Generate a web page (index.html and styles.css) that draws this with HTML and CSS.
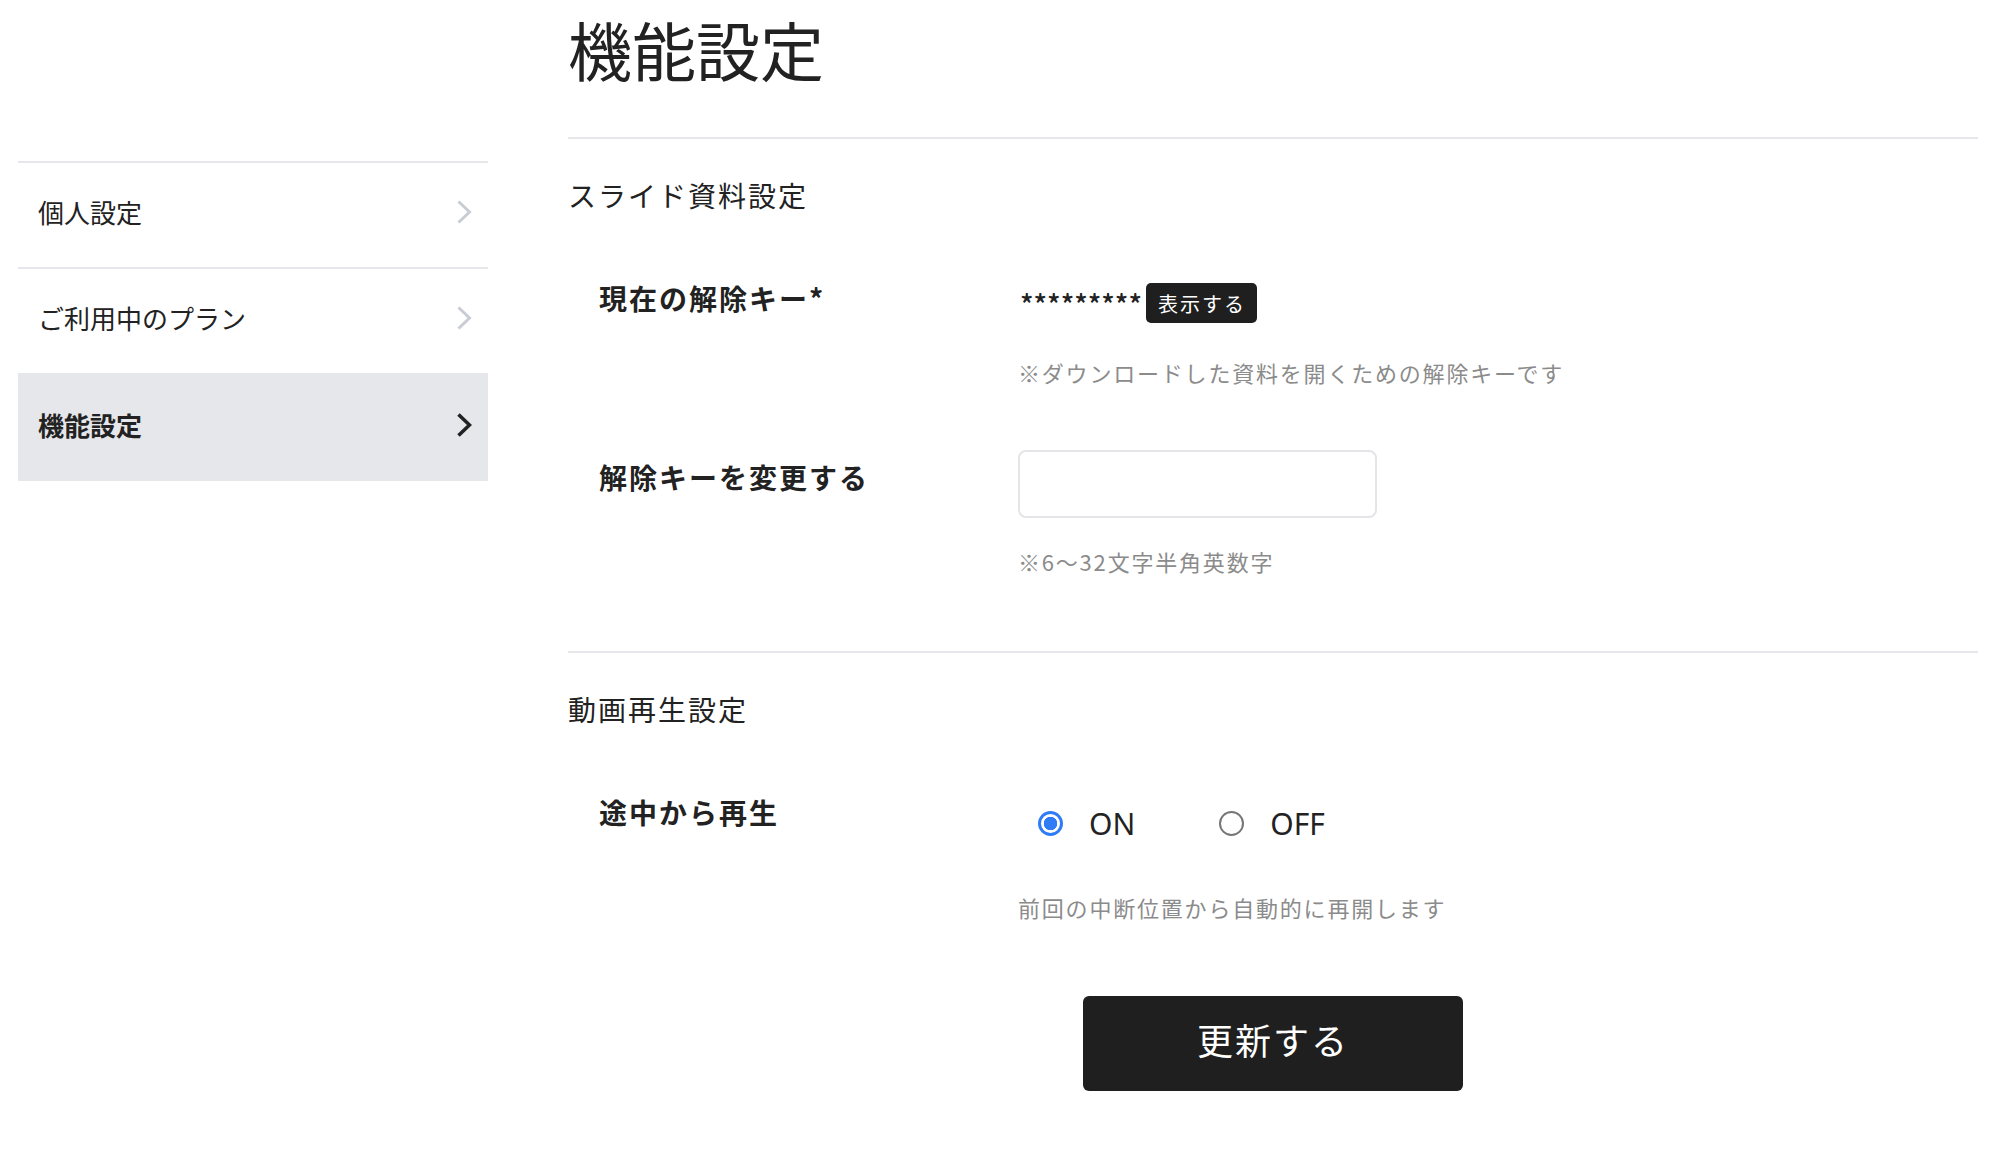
FILE: index.html
```html
<!DOCTYPE html>
<html lang="ja">
<head>
    <meta charset="UTF-8">
    <meta name="viewport" content="width=device-width, initial-scale=1.0">
    <title>機能設定</title>
    <link rel="stylesheet" href="styles.css">
</head>
<body>
    <div class="layout">
        <nav class="sidebar">
            <ul class="side-menu">
                <li class="side-item">
                    <a href="#">個人設定</a>
                    <svg class="chevron" viewBox="0 0 16 24"><path d="M2.5 1.5 L13.5 12 L2.5 22.5"/></svg>
                </li>
                <li class="side-item">
                    <a href="#">ご利用中のプラン</a>
                    <svg class="chevron" viewBox="0 0 16 24"><path d="M2.5 1.5 L13.5 12 L2.5 22.5"/></svg>
                </li>
                <li class="side-item active">
                    <a href="#">機能設定</a>
                    <svg class="chevron" viewBox="0 0 16 24"><path d="M2.5 1.5 L13.5 12 L2.5 22.5"/></svg>
                </li>
            </ul>
        </nav>

        <main class="main">
            <header class="page-header">
                <h1>機能設定</h1>
            </header>

            <form id="settingsForm">
                <section class="section">
                    <h2>スライド資料設定</h2>

                    <div class="field">
                        <div class="field-label">現在の解除キー*</div>
                        <div class="field-body">
                            <div class="key-line">
                                <span id="keyValue" class="key-value">*********</span>
                                <button type="button" id="showKey" class="badge">表示する</button>
                            </div>
                            <p class="field-hint">※ダウンロードした資料を開くための解除キーです</p>
                        </div>
                    </div>

                    <div class="field field-input">
                        <label class="field-label" for="newKey">解除キーを変更する</label>
                        <div class="field-body">
                            <input type="text" id="newKey" name="newKey" class="text-input">
                            <p class="field-hint">※6〜32文字半角英数字</p>
                        </div>
                    </div>
                </section>

                <section class="section">
                    <h2>動画再生設定</h2>

                    <div class="field">
                        <div class="field-label">途中から再生</div>
                        <div class="field-body">
                            <div class="radio-group">
                                <label class="radio"><input type="radio" name="resume" value="on" checked><span>ON</span></label>
                                <label class="radio"><input type="radio" name="resume" value="off"><span>OFF</span></label>
                            </div>
                            <p class="field-hint">前回の中断位置から自動的に再開します</p>
                        </div>
                    </div>
                </section>

                <button type="submit" class="submit-btn">更新する</button>
            </form>
        </main>
    </div>
</body>
</html>
```

FILE: styles.css
```css
body {
    margin: 0;
    font-family: "Noto Sans CJK JP", "Noto Sans", sans-serif;
    color: #222;
    background: #fff;
}
.layout {
    display: flex;
    gap: 80px;
    padding: 0 32px 0 18px;
}
.sidebar {
    width: 470px;
    flex-shrink: 0;
    padding-top: 161px;
}
.side-menu {
    list-style: none;
    margin: 0;
    padding: 0;
}
.side-item {
    display: flex;
    align-items: center;
    justify-content: space-between;
    box-sizing: border-box;
    height: 106px;
    padding: 0 16px 7px 20px;
    border-top: 2px solid #e6e6eb;
}
.side-item a {
    font-size: 26px;
    color: #222;
    text-decoration: none;
}
.chevron {
    width: 16px;
    height: 24px;
    fill: none;
    stroke: #c9ccd4;
    stroke-width: 3;
}
.side-item.active {
    height: 108px;
    background: #e6e7eb;
    border-top-color: #e6e7eb;
}
.side-item.active a {
    font-weight: 700;
}
.side-item.active .chevron {
    stroke: #222;
    stroke-width: 3.6;
}

.main {
    flex: 1;
}
.page-header {
    padding: 3px 0 44px;
    border-bottom: 2px solid #e6e6eb;
}
.page-header h1 {
    margin: 0;
    font-size: 64px;
    font-weight: 400;
    line-height: 90px;
}
.section {
    padding-bottom: 73px;
    border-bottom: 2px solid #e6e6eb;
}
.section:last-of-type {
    border-bottom: none;
    padding-bottom: 0;
}
.section h2 {
    margin: 35px 0 0;
    font-size: 28px;
    font-weight: 400;
    line-height: 42px;
    letter-spacing: 2px;
}
.field {
    display: flex;
    margin-top: 61px;
    padding-left: 31px;
}
.field-label {
    width: 419px;
    flex-shrink: 0;
    font-size: 28px;
    font-weight: 700;
    line-height: 42px;
    letter-spacing: 2px;
}
.field-input .field-label {
    padding-top: 6px;
}
.field-body {
    flex: 1;
}
.field-hint {
    margin: 30px 0 0;
    font-size: 22px;
    line-height: 33px;
    letter-spacing: 1.8px;
    color: #8b8b8b;
}
.field-input .field-hint {
    margin-top: 27px;
}
.key-line {
    display: flex;
    align-items: center;
    height: 40px;
    margin-top: 6px;
    padding-bottom: 3px;
}
.key-value {
    font-size: 28px;
    font-weight: 500;
    margin-left: 2px;
}
.badge {
    margin-left: 4px;
    height: 40px;
    padding: 0 11px 0 12px;
    border: none;
    border-radius: 5px;
    background: #1f1f1f;
    color: #fff;
    font-family: inherit;
    font-size: 20px;
    letter-spacing: 2px;
    cursor: pointer;
}
.text-input {
    display: block;
    width: 359px;
    height: 68px;
    box-sizing: border-box;
    border: 2px solid #e4e4e9;
    border-radius: 8px;
    padding: 0 16px;
    font-size: 24px;
    font-family: inherit;
}
.radio-group {
    display: flex;
    align-items: center;
    gap: 84px;
    margin: 10px 0 0 20px;
    padding-bottom: 15px;
}
.radio {
    display: flex;
    align-items: center;
    gap: 26px;
    font-family: "Noto Sans", sans-serif;
    font-size: 30px;
    line-height: 45px;
    cursor: pointer;
}
.radio input {
    appearance: none;
    margin: 0;
    width: 25px;
    height: 25px;
    box-sizing: border-box;
    border: 2px solid #767676;
    border-radius: 50%;
    background: #fff;
}
.radio input:checked {
    border: 3px solid #2f7cf6;
    background: radial-gradient(circle, #2f7cf6 0 6.5px, #fff 7px);
}
.submit-btn {
    display: block;
    width: 380px;
    height: 95px;
    margin: 72px auto 0;
    padding: 0 0 10px;
    border: none;
    border-radius: 6px;
    background: #1f1f1f;
    color: #fff;
    font-family: inherit;
    font-size: 36px;
    letter-spacing: 2px;
    cursor: pointer;
}
```
